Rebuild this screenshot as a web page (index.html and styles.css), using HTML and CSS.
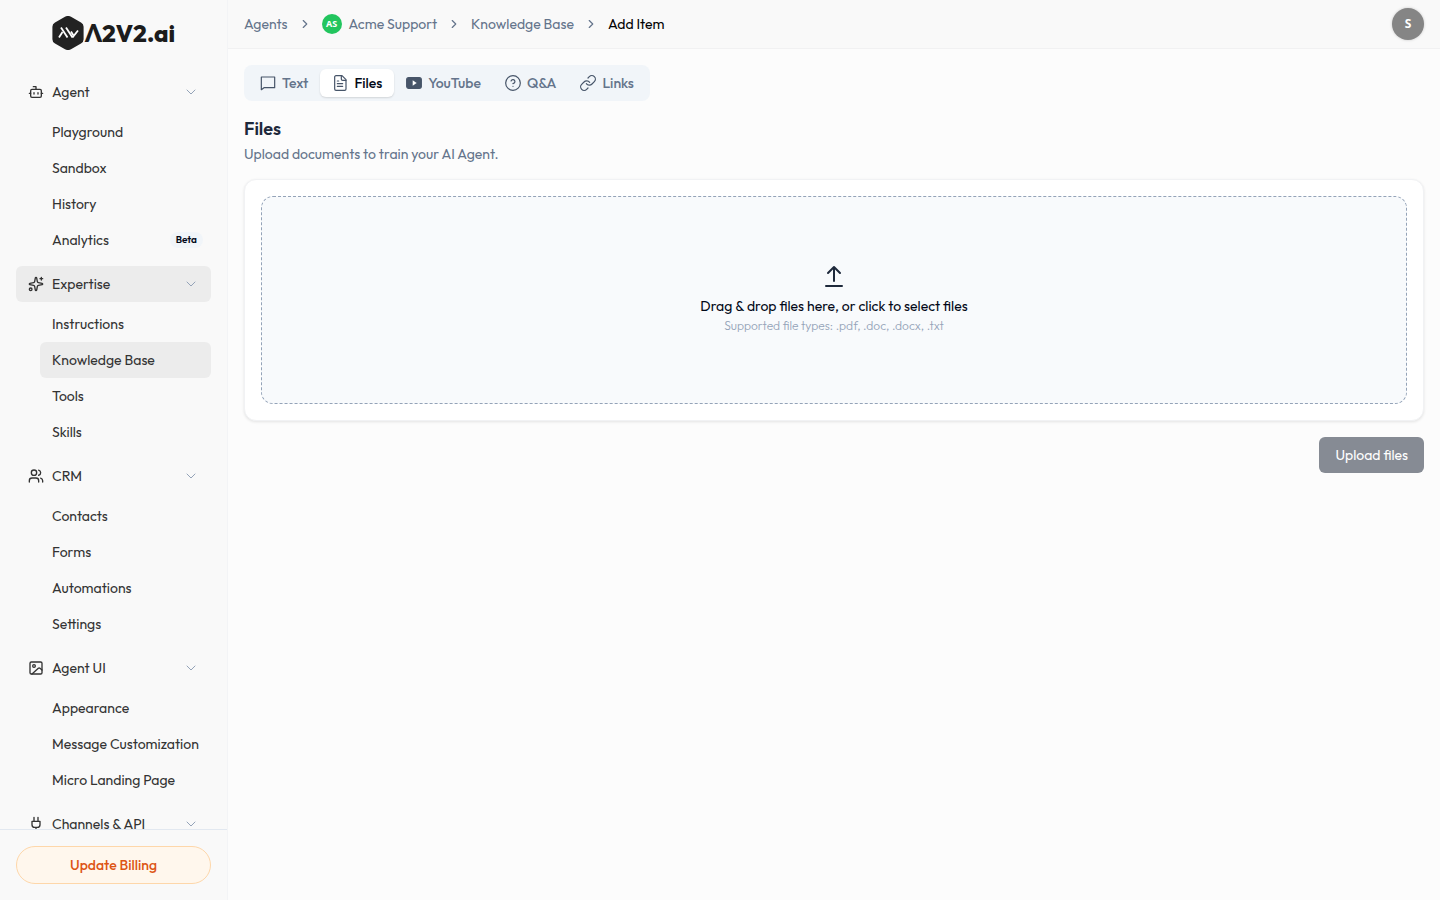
FILE: index.html
```html
<!DOCTYPE html>
<html lang="en">
<head>
<meta charset="UTF-8">
<meta name="viewport" content="width=device-width, initial-scale=1">
<title>Add Item</title>
<link rel="stylesheet" href="styles.css">
</head>
<body>

<!-- shared icons -->
<svg class="sprite" aria-hidden="true">
    <symbol id="chev-down" viewBox="0 0 24 24"><path d="m6 9 6 6 6-6"/></symbol>
    <symbol id="chev-right" viewBox="0 0 24 24"><path d="m9 18 6-6-6-6"/></symbol>
</svg>

<aside class="sidebar">
    <a class="logo" href="#">
        <svg class="logo-mark" viewBox="0 0 32 34">
            <path fill="#222" d="M13 .8a6 6 0 0 1 6 0l10 5.600a5 5 0 0 1 2.600 4.400v12.400a5 5 0 0 1-2.600 4.400l-10 5.600a6 6 0 0 1-6 0l-10-5.600a5 5 0 0 1-2.600-4.400V10.800A5 5 0 0 1 3 6.400z"/>
            <g fill="none" stroke="#fff" stroke-width="1.800"><path d="m7 21.500 3.500-5.500"/><path d="m9 11.500 6.500 10"/><path d="m14 11.500 6.500 10"/><path d="m19 15.500 2.500 4"/><path d="m20.500 21.500 5.500-7"/></g>
        </svg>
        <span>Λ2V2.ai</span>
    </a>

    <nav class="nav">
        <div class="group">
            <button class="group-head" type="button">
                <svg class="icon" viewBox="0 0 24 24"><path d="M12 8V4H8"/><rect width="16" height="12" x="4" y="8" rx="2"/><path d="M2 14h2M20 14h2M15 13v2M9 13v2"/></svg>
                Agent <svg class="icon chev"><use href="#chev-down"/></svg>
            </button>
            <a href="#">Playground</a>
            <a href="#">Sandbox</a>
            <a href="#">History</a>
            <a href="#">Analytics <span class="badge">Beta</span></a>
        </div>
        <div class="group">
            <button class="group-head active" type="button">
                <svg class="icon" viewBox="0 0 24 24"><path d="M11.017 2.814a1 1 0 0 1 1.966 0l1.051 5.558a2 2 0 0 0 1.594 1.594l5.558 1.051a1 1 0 0 1 0 1.966l-5.558 1.051a2 2 0 0 0-1.594 1.594l-1.051 5.558a1 1 0 0 1-1.966 0l-1.051-5.558a2 2 0 0 0-1.594-1.594l-5.558-1.051a1 1 0 0 1 0-1.966l5.558-1.051a2 2 0 0 0 1.594-1.594z"/><path d="M20 2v4M22 4h-4"/><circle cx="4" cy="20" r="2"/></svg>
                Expertise <svg class="icon chev"><use href="#chev-down"/></svg>
            </button>
            <a href="#">Instructions</a>
            <a class="active" href="#">Knowledge Base</a>
            <a href="#">Tools</a>
            <a href="#">Skills</a>
        </div>
        <div class="group">
            <button class="group-head" type="button">
                <svg class="icon" viewBox="0 0 24 24"><path d="M16 21v-2a4 4 0 0 0-4-4H6a4 4 0 0 0-4 4v2"/><circle cx="9" cy="7" r="4"/><path d="M22 21v-2a4 4 0 0 0-3-3.870M16 3.130a4 4 0 0 1 0 7.750"/></svg>
                CRM <svg class="icon chev"><use href="#chev-down"/></svg>
            </button>
            <a href="#">Contacts</a>
            <a href="#">Forms</a>
            <a href="#">Automations</a>
            <a href="#">Settings</a>
        </div>
        <div class="group">
            <button class="group-head" type="button">
                <svg class="icon" viewBox="0 0 24 24"><rect width="18" height="18" x="3" y="3" rx="2"/><circle cx="9" cy="9" r="2"/><path d="M6 21 15.500 12.500a2 2 0 0 1 2.500 0L21 15"/></svg>
                Agent UI <svg class="icon chev"><use href="#chev-down"/></svg>
            </button>
            <a href="#">Appearance</a>
            <a href="#">Message Customization</a>
            <a href="#">Micro Landing Page</a>
        </div>
        <div class="group">
            <button class="group-head" type="button">
                <svg class="icon" viewBox="0 0 24 24"><path d="M12 22v-5M9 8V2M15 8V2M18 8v5a4 4 0 0 1-4 4h-4a4 4 0 0 1-4-4V8z"/></svg>
                Channels &amp; API <svg class="icon chev"><use href="#chev-down"/></svg>
            </button>
        </div>
    </nav>

    <div class="sidebar-foot">
        <button class="billing" type="button">Update Billing</button>
    </div>
</aside>

<div class="page">
    <header class="topbar">
        <nav class="crumbs" aria-label="Breadcrumb">
            <a href="#">Agents</a>
            <svg class="icon"><use href="#chev-right"/></svg>
            <a class="agent" href="#"><span class="agent-dot">AS</span>Acme Support</a>
            <svg class="icon"><use href="#chev-right"/></svg>
            <a href="#">Knowledge Base</a>
            <svg class="icon"><use href="#chev-right"/></svg>
            <span class="current">Add Item</span>
        </nav>
        <button class="avatar" type="button" aria-label="Account">S</button>
    </header>

    <main>
        <div class="tabs" role="tablist">
            <button type="button" role="tab">
                <svg class="icon" viewBox="0 0 24 24"><path d="M22 3v16H6l-4 3V3z"/></svg>Text
            </button>
            <button class="active" type="button" role="tab" aria-selected="true">
                <svg class="icon" viewBox="0 0 24 24"><path d="M15 1H6a2 2 0 0 0-2 2v18a2 2 0 0 0 2 2h13a2 2 0 0 0 2-2V7z"/><path d="M14 1v5a2 2 0 0 0 2 2h5M10 9H8M16 13H8M16 17H8"/></svg>Files
            </button>
            <button type="button" role="tab">
                <svg class="icon" viewBox="0 0 24 24"><rect x="1" y="4" width="22" height="16" rx="3" fill="currentColor"/><path d="m10 8 6 4-6 4z" fill="#fff" stroke="none"/></svg>YouTube
            </button>
            <button type="button" role="tab">
                <svg class="icon" viewBox="0 0 24 24"><circle cx="12" cy="12" r="11"/><path d="M9.090 9a3 3 0 0 1 5.830 1c0 2-3 3-3 3M12 17h.01"/></svg>Q&amp;A
            </button>
            <button type="button" role="tab">
                <svg class="icon" viewBox="0 0 24 24"><path d="M9.500 13a5.500 5.500 0 0 0 8.500.5l3.500-3.500a5.300 5.300 0 0 0-7.500-7.500L12 4.500"/><path d="M14.500 11a5.500 5.500 0 0 0-8.500-.5L2.500 14a5.300 5.300 0 0 0 7.500 7.500l2-2"/></svg>Links
            </button>
        </div>

        <h1>Files</h1>
        <p class="lead">Upload documents to train your AI Agent.</p>

        <div class="card">
            <label class="dropzone" for="files">
                <svg class="upload" viewBox="0 0 24 24"><path d="M12 17V3M6 9l6-6 6 6M4 22h16"/></svg>
                <span class="drop-title">Drag &amp; drop files here, or click to select files</span>
                <span class="drop-hint">Supported file types: .pdf, .doc, .docx, .txt</span>
                <input id="files" type="file" accept=".pdf,.doc,.docx,.txt" multiple>
            </label>
        </div>

        <button class="submit" type="button" disabled>Upload files</button>
    </main>
</div>

</body>
</html>
```
FILE: styles.css
```css
*{box-sizing:border-box;margin:0}
body{
    font:14px/20px Outfit,Lato,sans-serif;
    background:#fcfcfc;color:#020817;
    display:flex;min-height:100vh;
}
button{font:inherit;color:inherit;background:none;border:0;padding:0;cursor:pointer}
a{color:inherit;text-decoration:none}
.sprite{display:none}
.icon{
    width:16px;height:16px;flex:none;
    fill:none;stroke:currentColor;stroke-width:2;stroke-linecap:round;stroke-linejoin:round;
}

/* ─── Sidebar ─── */
.sidebar{
    position:sticky;top:0;
    width:228px;height:100vh;flex:none;
    display:flex;flex-direction:column;
    background:#f9f9f9;border-right:1px solid #f3f4f6;color:#333;
}
.logo{
    height:66px;flex:none;
    display:flex;align-items:center;justify-content:center;gap:1px;
    font-size:24px;line-height:32px;font-weight:800;color:#1c1c1c;
}
.logo-mark{width:32px;height:34px}

.nav{
    flex:1;min-height:0;overflow:hidden;
    padding:8px 16px;
    display:flex;flex-direction:column;gap:8px;
}
.group{display:flex;flex-direction:column;flex:none}
.group-head,.group a{
    display:flex;align-items:center;
    height:36px;padding:0 12px;border-radius:6px;
}
.group-head{gap:8px;margin-bottom:4px}
.group a{margin-left:24px;white-space:nowrap}
.group .active{background:#ececec}
.chev{margin-left:auto;color:#94a3b8;stroke-width:1.5}
.badge{
    margin-left:auto;margin-right:-4px;padding:0 6px;
    font-size:10px;line-height:16px;font-weight:600;
    background:#f1f5f9;border-radius:8px;color:#020817;
}
.sidebar-foot{padding:16px;border-top:1px solid #e2e8f0}
.billing{
    width:100%;height:38px;
    border:1px solid #fed7aa;border-radius:19px;
    background:#fff7ed;color:#dd5414;font-weight:500;
}

/* ─── Top bar ─── */
.page{flex:1;min-width:0}
.topbar{
    height:49px;padding:0 16px;
    display:flex;align-items:center;justify-content:space-between;
    background:#f9f9f9;border-bottom:1px solid #f1f1f2;
}
.crumbs{display:flex;align-items:center;gap:10px;color:#64748b}
.crumbs .icon{width:14px;height:14px}
.crumbs .current{color:#020202}
.agent{display:flex;align-items:center;gap:7px}
.agent-dot{
    width:20px;height:20px;border-radius:50%;
    background:#22c55e;color:#fff;
    font-family:"Noto Sans",sans-serif;
    font-size:9px;font-weight:700;text-align:center;
}
.avatar{
    width:32px;height:32px;border-radius:50%;
    background:#858585;color:#fff;
    font-family:"Noto Sans",sans-serif;
    font-size:12px;font-weight:700;
    box-shadow:0 0 3px #0003;
}

/* ─── Content ─── */
main{padding:16px;display:flex;flex-direction:column;align-items:flex-start}
.tabs{
    display:flex;padding:4px;
    background:#f1f5f9;border-radius:8px;color:#64748b;
}
.tabs button{
    display:flex;align-items:center;gap:6px;
    height:28px;padding:0 12px;border-radius:6px;font-weight:500;
}
.tabs .icon{color:#475569;stroke-width:1.8}
.tabs .active{background:#fff;color:#020817;box-shadow:0 1px 2px #0002}
h1{margin-top:14px;font-size:18px;line-height:28px;font-weight:600;color:#1e293b}
.lead{margin-top:1px;color:#64748b}

.card{
    width:100%;margin-top:15px;padding:16px;
    background:#fff;border:1px solid #f1f2f4;border-radius:12px;
    box-shadow:0 1px 3px #0000001a;
}
.dropzone{
    display:flex;flex-direction:column;align-items:center;justify-content:center;
    min-height:208px;padding:16px;
    background:#f8fafc;border:1px dashed #94a3b8;border-radius:12px;
    cursor:pointer;
}
.dropzone input{position:absolute;width:1px;height:1px;opacity:0}
.upload{width:24px;height:24px;fill:none;stroke:#1e293b;stroke-width:2;stroke-linecap:round;stroke-linejoin:round}
.drop-title{margin-top:8px}
.drop-hint{font-size:12px;font-weight:300;color:#94a3b8}

.submit{
    align-self:flex-end;margin-top:16px;
    height:36px;padding:0 16px;border-radius:6px;
    background:#868b94;color:#fff;
}
```
